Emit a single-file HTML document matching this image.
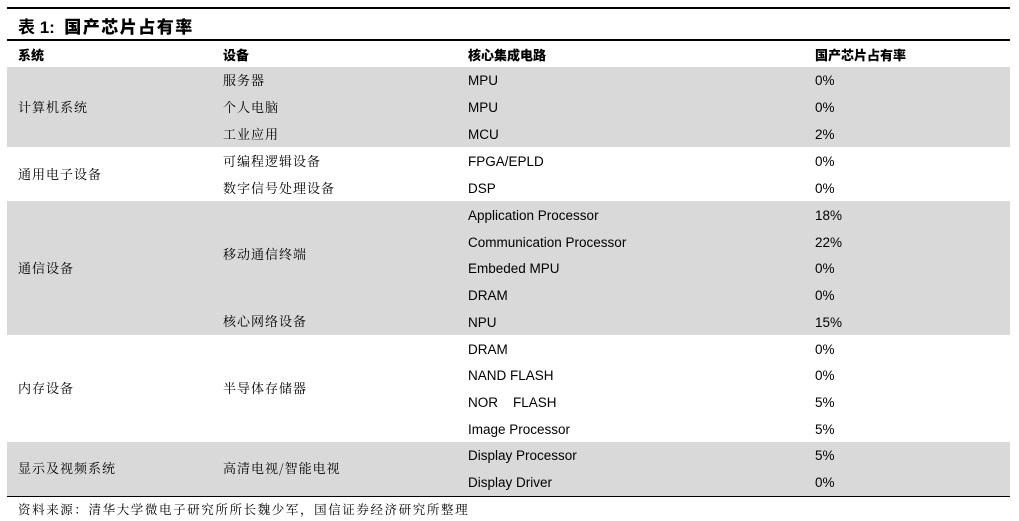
<!DOCTYPE html><html><head><meta charset="utf-8"><style>
body{margin:0;width:1019px;height:521px;background:#fff;position:relative;overflow:hidden;font-family:"Liberation Sans","Noto Serif CJK SC",serif;color:#000}
.a{position:absolute;white-space:nowrap}
.l{position:absolute;left:7px;width:1003px;height:1.5px;background:#000}
.g{position:absolute;left:7px;width:1003px;background:#d9d9d9}
.c{font-family:"Noto Serif CJK SC",serif;font-size:13px;letter-spacing:1px}
.e{font-family:"Liberation Sans",sans-serif;font-size:13.5px}
.h{font-family:"Noto Sans CJK SC",sans-serif;font-weight:900;font-size:13px}
</style></head><body>
<div class="l" style="top:7px"></div>
<div class="a" style="left:18px;top:13px;font-size:17px;font-weight:bold;font-family:'Liberation Sans','Noto Sans CJK SC',sans-serif">表 1:&nbsp; <span style="font-family:'Noto Sans CJK SC',sans-serif;font-weight:900;letter-spacing:1.5px">国产芯片占有率</span></div>
<div class="l" style="top:39px"></div>
<div class="a h" style="left:18px;top:45px">系统</div>
<div class="a h" style="left:223px;top:45px">设备</div>
<div class="a h" style="left:468px;top:45px">核心集成电路</div>
<div class="a h" style="left:815px;top:45px">国产芯片占有率</div>
<div class="g" style="top:67px;height:80px"></div>
<div class="g" style="top:201px;height:134px"></div>
<div class="g" style="top:442px;height:54px"></div>
<div class="l" style="top:496px;height:1px"></div>
<div class="a c" style="left:18px;top:97px">计算机系统</div>
<div class="a c" style="left:18px;top:164px">通用电子设备</div>
<div class="a c" style="left:18px;top:258px">通信设备</div>
<div class="a c" style="left:18px;top:378px">内存设备</div>
<div class="a c" style="left:18px;top:458px">显示及视频系统</div>
<div class="a c" style="left:223px;top:70px">服务器</div>
<div class="a c" style="left:223px;top:97px">个人电脑</div>
<div class="a c" style="left:223px;top:124px">工业应用</div>
<div class="a c" style="left:223px;top:151px">可编程逻辑设备</div>
<div class="a c" style="left:223px;top:178px">数字信号处理设备</div>
<div class="a c" style="left:223px;top:244px">移动通信终端</div>
<div class="a c" style="left:223px;top:311px">核心网络设备</div>
<div class="a c" style="left:223px;top:378px">半导体存储器</div>
<div class="a c" style="left:223px;top:458px">高清电视/智能电视</div>
<div class="a e" style="left:468px;top:73px">MPU</div><div class="a e" style="left:815px;top:73px">0%</div>
<div class="a e" style="left:468px;top:100px">MPU</div><div class="a e" style="left:815px;top:100px">0%</div>
<div class="a e" style="left:468px;top:127px">MCU</div><div class="a e" style="left:815px;top:127px">2%</div>
<div class="a e" style="left:468px;top:154px">FPGA/EPLD</div><div class="a e" style="left:815px;top:154px">0%</div>
<div class="a e" style="left:468px;top:181px">DSP</div><div class="a e" style="left:815px;top:181px">0%</div>
<div class="a e" style="left:468px;top:208px">Application Processor</div><div class="a e" style="left:815px;top:208px">18%</div>
<div class="a e" style="left:468px;top:235px">Communication Processor</div><div class="a e" style="left:815px;top:235px">22%</div>
<div class="a e" style="left:468px;top:261px">Embeded MPU</div><div class="a e" style="left:815px;top:261px">0%</div>
<div class="a e" style="left:468px;top:288px">DRAM</div><div class="a e" style="left:815px;top:288px">0%</div>
<div class="a e" style="left:468px;top:315px">NPU</div><div class="a e" style="left:815px;top:315px">15%</div>
<div class="a e" style="left:468px;top:342px">DRAM</div><div class="a e" style="left:815px;top:342px">0%</div>
<div class="a e" style="left:468px;top:368px">NAND FLASH</div><div class="a e" style="left:815px;top:368px">0%</div>
<div class="a e" style="left:468px;top:395px">NOR&nbsp;&nbsp;&nbsp; FLASH</div><div class="a e" style="left:815px;top:395px">5%</div>
<div class="a e" style="left:468px;top:422px">Image Processor</div><div class="a e" style="left:815px;top:422px">5%</div>
<div class="a e" style="left:468px;top:448px">Display Processor</div><div class="a e" style="left:815px;top:448px">5%</div>
<div class="a e" style="left:468px;top:475px">Display Driver</div><div class="a e" style="left:815px;top:475px">0%</div>
<div class="a c" style="left:18px;top:500px;font-size:12.5px;letter-spacing:1.6px">资料来源：清华大学微电子研究所所长魏少军，国信证券经济研究所整理</div>
</body></html>
